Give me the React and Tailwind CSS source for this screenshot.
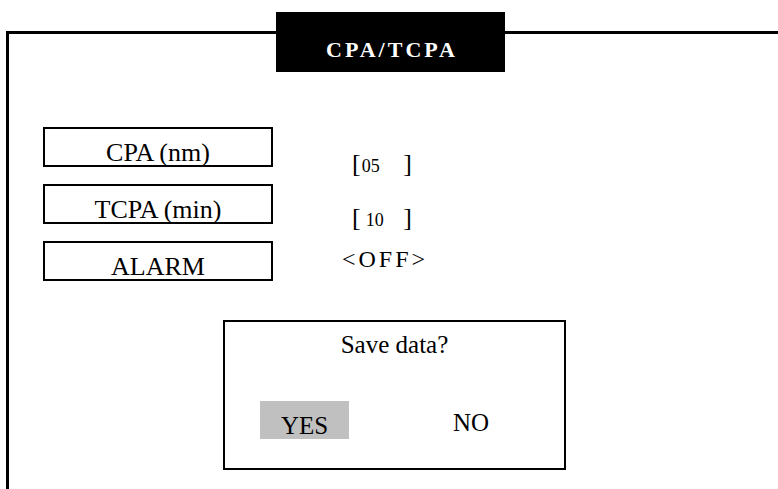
function LabelBox({ children }) {
    return (
        <div className="w-[230px] h-[40px] border-2 border-black flex justify-center pt-[11px] leading-[26px] text-[26px] text-black whitespace-nowrap shrink-0">
            {children}
        </div>
    );
}

function Bracketed({ value, offset }) {
    return (
        <div className="flex items-baseline w-[60px] text-[26px] leading-[26px] text-black">
            <span>[</span>
            <span className={`text-[18px] ${offset}`}>{value}</span>
            <span className="flex-1" />
            <span>]</span>
        </div>
    );
}

export default function App() {
    return (
        <div className="w-[778px] h-[489px] bg-white overflow-hidden pt-[31px] pl-[6px] font-['Liberation_Serif','DejaVu_Serif',serif]">
            <div className="h-full border-t-[3px] border-l-[3px] border-black flex flex-col">
                {/* title */}
                <div className="ml-[267px] -mt-[22px] w-[229px] h-[60px] shrink-0 bg-black text-white font-bold text-[22px] leading-[22px] tracking-[3px] flex justify-center pt-[27px] pl-[3px]">
                    CPA/TCPA
                </div>

                {/* settings */}
                <div className="ml-[34px] mt-[55px] flex flex-col gap-[17px]">
                    <div className="flex items-start h-[40px]">
                        <LabelBox>CPA (nm)</LabelBox>
                        <div className="ml-[79px] mt-[24px]">
                            <Bracketed value="05" offset="ml-[1px]" />
                        </div>
                    </div>
                    <div className="flex items-start h-[40px]">
                        <LabelBox>TCPA (min)</LabelBox>
                        <div className="ml-[79px] mt-[21px]">
                            <Bracketed value="10" offset="ml-[5px]" />
                        </div>
                    </div>
                    <div className="flex items-start h-[40px]">
                        <LabelBox>ALARM</LabelBox>
                        <div className="ml-[69px] mt-[6px] text-[24px] leading-[24px] tracking-[3px] text-black">
                            &lt;OFF&gt;
                        </div>
                    </div>
                </div>

                {/* confirm dialog */}
                <div className="ml-[214px] mt-[39px] w-[343px] h-[150px] shrink-0 border-2 border-black flex flex-col">
                    <div className="pt-[10px] text-center text-[25px] leading-[25px] text-black">Save data?</div>
                    <div className="mt-[44px] ml-[35px] flex items-start">
                        <div className="w-[89px] h-[38px] bg-[#c0c0c0] flex justify-center pt-[12px] text-[25px] leading-[25px] text-black">
                            YES
                        </div>
                        <div className="ml-[104px] mt-[9px] text-[25px] leading-[25px] text-black">NO</div>
                    </div>
                </div>
            </div>
        </div>
    );
}
